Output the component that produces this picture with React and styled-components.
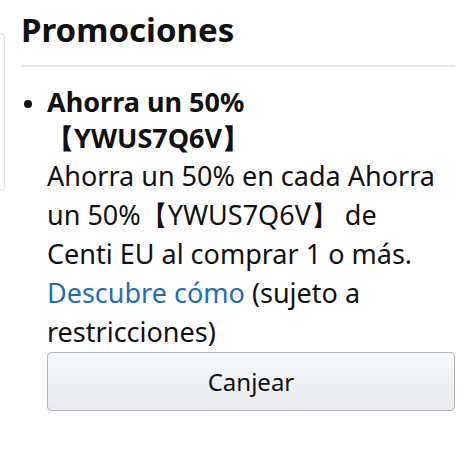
import styled, { createGlobalStyle } from "styled-components";

const GlobalStyle = createGlobalStyle`
  html, body {
    margin: 0;
    padding: 0;
    background: #fff;
  }
  body {
    font-family: "Noto Sans", "Open Sans", sans-serif;
    color: #111;
  }
`;

const Page = styled.div`
  display: flex;
  width: 475px;
  height: 455px;
  overflow: hidden;
`;

const SideCard = styled.div`
  flex: none;
  width: 4px;
  height: 156px;
  margin-top: 33px;
  border: 1px solid #d5d9d9;
  border-left: none;
  border-radius: 0 6px 6px 0;
`;

const Section = styled.section`
  flex: 1;
  padding: 10px 20px 0 16px;
`;

const Title = styled.h2`
  margin: 0;
  padding-bottom: 15px;
  font-size: 33px;
  font-weight: 700;
  line-height: 40px;
  border-bottom: 2px solid #e7e7e7;
`;

const List = styled.ul`
  margin: 17px 0 0;
  padding: 0 0 0 26px;
  font-size: 27px;
  line-height: 39px;
`;

const Item = styled.li`
  &::marker {
    font-size: 22px;
  }
`;

const Headline = styled.div`
  font-weight: 700;
  line-height: 36px;
`;

const Code = styled.span`
  display: block;
`;

const Body = styled.p`
  margin: 0;
  max-width: 396px;
`;

const Link = styled.a`
  color: #1f6db5;
  text-decoration: none;
`;

const Button = styled.button`
  display: block;
  width: 100%;
  height: 59px;
  margin-top: 1px;
  border: 1px solid #b3b6bb;
  border-radius: 4px;
  background: linear-gradient(#f7f8fa, #e7e9ec);
  font-family: inherit;
  font-size: 24px;
  color: #111;
`;

export default function App() {
  return (
    <>
      <GlobalStyle />
      <Page>
        <SideCard />
        <Section>
          <Title>Promociones</Title>
          <List>
            <Item>
              <Headline>
                Ahorra un 50%
                <Code>【YWUS7Q6V】</Code>
              </Headline>
              <Body>
                Ahorra un 50% en cada Ahorra un 50%【YWUS7Q6V】 de Centi EU al
                comprar 1 o más. <Link href="#">Descubre cómo</Link> (sujeto a
                restricciones)
              </Body>
              <Button>Canjear</Button>
            </Item>
          </List>
        </Section>
      </Page>
    </>
  );
}
